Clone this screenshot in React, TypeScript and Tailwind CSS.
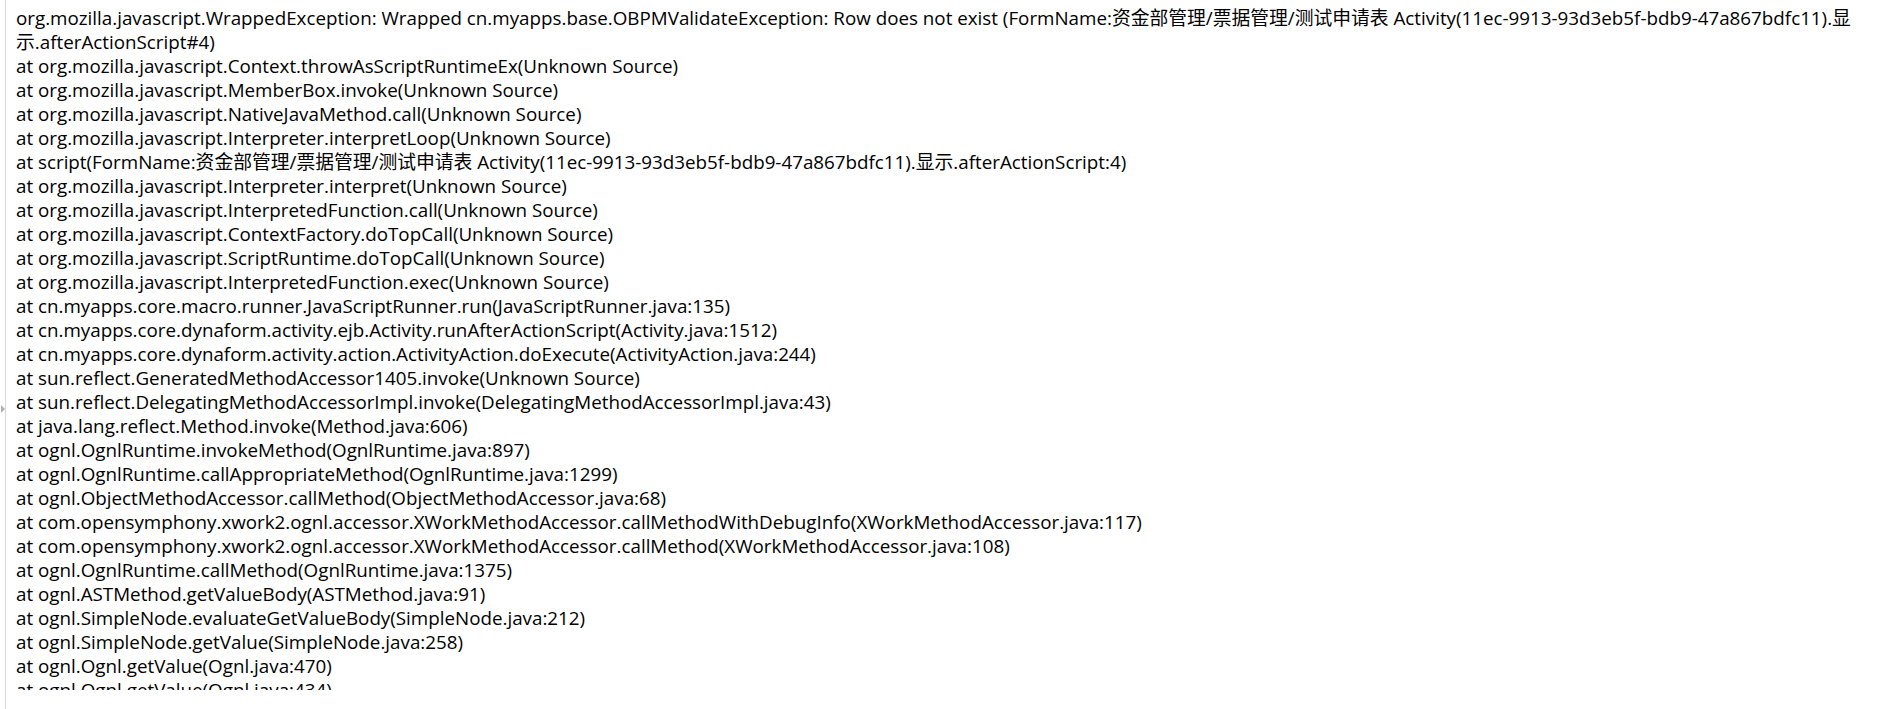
import React from "react";

const lines: string[] = [
  "org.mozilla.javascript.WrappedException: Wrapped cn.myapps.base.OBPMValidateException: Row does not exist (FormName:资金部管理/票据管理/测试申请表 Activity(11ec-9913-93d3eb5f-bdb9-47a867bdfc11).显示.afterActionScript#4)",
  "at org.mozilla.javascript.Context.throwAsScriptRuntimeEx(Unknown Source)",
  "at org.mozilla.javascript.MemberBox.invoke(Unknown Source)",
  "at org.mozilla.javascript.NativeJavaMethod.call(Unknown Source)",
  "at org.mozilla.javascript.Interpreter.interpretLoop(Unknown Source)",
  "at script(FormName:资金部管理/票据管理/测试申请表 Activity(11ec-9913-93d3eb5f-bdb9-47a867bdfc11).显示.afterActionScript:4)",
  "at org.mozilla.javascript.Interpreter.interpret(Unknown Source)",
  "at org.mozilla.javascript.InterpretedFunction.call(Unknown Source)",
  "at org.mozilla.javascript.ContextFactory.doTopCall(Unknown Source)",
  "at org.mozilla.javascript.ScriptRuntime.doTopCall(Unknown Source)",
  "at org.mozilla.javascript.InterpretedFunction.exec(Unknown Source)",
  "at cn.myapps.core.macro.runner.JavaScriptRunner.run(JavaScriptRunner.java:135)",
  "at cn.myapps.core.dynaform.activity.ejb.Activity.runAfterActionScript(Activity.java:1512)",
  "at cn.myapps.core.dynaform.activity.action.ActivityAction.doExecute(ActivityAction.java:244)",
  "at sun.reflect.GeneratedMethodAccessor1405.invoke(Unknown Source)",
  "at sun.reflect.DelegatingMethodAccessorImpl.invoke(DelegatingMethodAccessorImpl.java:43)",
  "at java.lang.reflect.Method.invoke(Method.java:606)",
  "at ognl.OgnlRuntime.invokeMethod(OgnlRuntime.java:897)",
  "at ognl.OgnlRuntime.callAppropriateMethod(OgnlRuntime.java:1299)",
  "at ognl.ObjectMethodAccessor.callMethod(ObjectMethodAccessor.java:68)",
  "at com.opensymphony.xwork2.ognl.accessor.XWorkMethodAccessor.callMethodWithDebugInfo(XWorkMethodAccessor.java:117)",
  "at com.opensymphony.xwork2.ognl.accessor.XWorkMethodAccessor.callMethod(XWorkMethodAccessor.java:108)",
  "at ognl.OgnlRuntime.callMethod(OgnlRuntime.java:1375)",
  "at ognl.ASTMethod.getValueBody(ASTMethod.java:91)",
  "at ognl.SimpleNode.evaluateGetValueBody(SimpleNode.java:212)",
  "at ognl.SimpleNode.getValue(SimpleNode.java:258)",
  "at ognl.Ognl.getValue(Ognl.java:470)",
  "at ognl.Ognl.getValue(Ognl.java:434)",
];

export default function App() {
  return (
    <div className="relative h-[709px] w-[1883px] overflow-hidden bg-white">
      <div className="absolute left-[1px] top-[405px] h-0 w-0 border-y-[4px] border-l-[4px] border-y-transparent border-l-[#b0b0b0]" />
      <div className="ml-[5px] h-[709px] border-l border-[#d9d9d9] pl-[10px] pr-[14px]">
        <div
          className="h-[690px] overflow-hidden pt-[6px] text-[18.8px] leading-[24px] text-black"
          style={{ fontFamily: '"Open Sans", "Noto Sans CJK SC", sans-serif' }}
        >
          {lines.map((l, i) => (
            <div key={i}>{l}</div>
          ))}
        </div>
      </div>
    </div>
  );
}
